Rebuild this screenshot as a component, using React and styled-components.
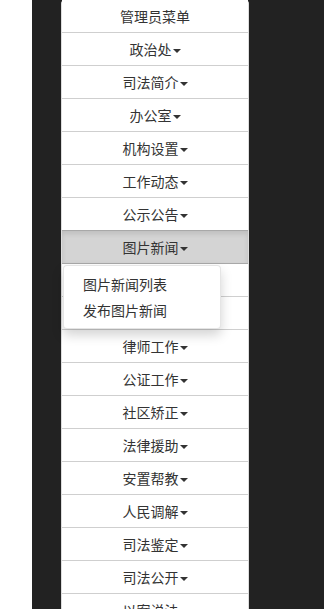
import React from "react";
import styled, { createGlobalStyle } from "styled-components";

const Global = createGlobalStyle`
  html, body { margin: 0; padding: 0; background: #fff; }
  body { font-family: "Noto Sans CJK SC", "Noto Sans", sans-serif; font-size: 14px; color: #333; }
  * { box-sizing: border-box; }
`;

const Page = styled.div`
  display: flex;
  padding-left: 32px;
  height: 609px;
  overflow: hidden;
`;

const Dark = styled.div`
  width: 292px;
  height: 609px;
  background: #222;
  padding-left: 29px;
`;

const Panel = styled.div`
  width: 188px;
  background: #fff;
  border-left: 1px solid #ddd;
  border-right: 1px solid #ddd;
  border-radius: 4px 4px 0 0;
  display: flex;
  flex-direction: column;
`;

const Row = styled.div`
  position: relative;
  height: 33px;
  line-height: 32px;
  text-align: center;
  font-size: 14px;
  color: #333;
  border-bottom: 1px solid #cfcfcf;
  background: ${(p) => (p.$active ? "#d4d4d4" : "#fff")};
  ${(p) =>
    p.$active &&
    `border-top: 1px solid #a8a8a8; border-bottom-color: #a8a8a8; margin-top: -1px; height: 34px; box-shadow: inset 0 3px 5px rgba(0,0,0,.1);`}
`;

const Caret = styled.span`
  display: inline-block;
  width: 0;
  height: 0;
  margin-left: 1px;
  vertical-align: middle;
  border-top: 4px solid #333;
  border-left: 4px solid transparent;
  border-right: 4px solid transparent;
`;

const Menu = styled.ul`
  position: absolute;
  top: 100%;
  left: 1px;
  margin: 2px 0 0;
  padding: 5px 0;
  width: 158px;
  list-style: none;
  background: #fff;
  border: 1px solid rgba(0, 0, 0, 0.1);
  border-radius: 4px;
  box-shadow: 0 6px 12px rgba(0, 0, 0, 0.175);
  z-index: 10;
  text-align: left;
`;

const MenuItem = styled.li`
  padding: 3px 19px;
  line-height: 20px;
  font-size: 14px;
  color: #333;
  white-space: nowrap;
`;

const items = [
  { t: "管理员菜单", caret: false },
  { t: "政治处" },
  { t: "司法简介" },
  { t: "办公室" },
  { t: "机构设置" },
  { t: "工作动态" },
  { t: "公示公告" },
  { t: "图片新闻", active: true, menu: ["图片新闻列表", "发布图片新闻"] },
  { t: "", caret: false, id: "h1" },
  { t: "", caret: false, id: "h2" },
  { t: "律师工作" },
  { t: "公证工作" },
  { t: "社区矫正" },
  { t: "法律援助" },
  { t: "安置帮教" },
  { t: "人民调解" },
  { t: "司法鉴定" },
  { t: "司法公开" },
  { t: "以案说法" },
];

export default function App() {
  return (
    <>
      <Global />
      <Page>
        <Dark>
          <Panel>
            {items.map((it) => (
              <Row key={it.id || it.t} $active={it.active}>
                {it.t}
                {it.caret !== false && <Caret />}
                {it.menu && (
                  <Menu>
                    {it.menu.map((m) => (
                      <MenuItem key={m}>{m}</MenuItem>
                    ))}
                  </Menu>
                )}
              </Row>
            ))}
          </Panel>
        </Dark>
      </Page>
    </>
  );
}
